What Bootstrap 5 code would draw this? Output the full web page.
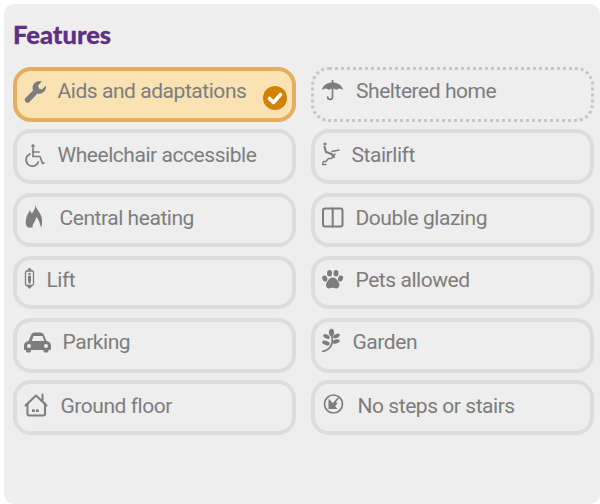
<!DOCTYPE html>
<html lang="en">
<head>
<meta charset="utf-8">
<title>Features</title>
<link href="https://cdn.jsdelivr.net/npm/bootstrap@5.3.0/dist/css/bootstrap.min.css" rel="stylesheet">
<style>
html,body{height:100%;margin:0;background:#fff;overflow:hidden}
.panel-box{margin:4px 0 0 4px;height:500px;background:#eee;border-radius:10px;padding:16px 6px 0 9px}
.feat-title{font-family:Lato,sans-serif;font-weight:900;font-size:25.500px;line-height:28px;color:#5e307f;margin:0 0 19px;-webkit-text-stroke:.3px #5e307f}
.feat-row{display:grid;grid-template-columns:283px 283px;column-gap:15px}
.h55{height:55px}.h54{height:54px}.h53{height:53px}
.mb7{margin-bottom:7px}.mb9{margin-bottom:9px}
.feat{display:flex;align-items:center;border:4.5px solid #ddd;border-radius:18px;padding:0 0 0 6.5px;background:transparent;color:#7d7d7d;font-family:Roboto,"Noto Sans",sans-serif;font-size:21px;letter-spacing:-.45px;line-height:26px;text-align:left;position:relative;min-width:0}
.feat svg{flex:none;fill:#7d7d7d;stroke:none}
.feat .ln{fill:none;stroke:#7d7d7d;stroke-width:1.7;stroke-linecap:round;stroke-linejoin:round}
.feat .cut{fill:#eee}
.up7 span{padding-bottom:7px}.up6 span{padding-bottom:6px}.up4 span{padding-bottom:4px}.up3 span{padding-bottom:3px}
.feat-on{background:#fbe2b3;border-color:#e3ae5f}
.feat-dot{border:3px dotted #c6c6c6;padding-left:8px}
.tick{position:absolute;right:5px;bottom:8px}
</style>
</head>
<body>
<div class="panel-box">
<h2 class="feat-title">Features</h2>

<div class="feat-row h55 mb7 up7">
<div class="feat feat-on">
<svg width="34" height="46" viewBox="24 71.5 34 46"><path d="M46 85l-4 4-3-1-1-3 4-4a7 7 0 0 0-9 9L25 98a3 3 0 0 0 4 4L37.500 93a7 7 0 0 0 8.500-8z"/></svg>
<span>Aids and adaptations</span>
<svg class="tick" width="24" height="24" viewBox="0 0 24 24"><circle cx="12" cy="12" r="12" fill="#d08200"/><path d="M6.500 12.500l4 4 7-8" fill="none" stroke="#fff" stroke-width="3.600" stroke-linecap="round" stroke-linejoin="round"/></svg>
</div>
<div class="feat feat-dot">
<svg width="34" height="49" viewBox="322 70 34 49"><path d="M322 90c1-5.500 6-7.500 10.500-7.500S342 84.500 343 90c-2.500-2-5-2-7 0-1.500-2-5-2-7 0-2-2-4.500-2-7 0z"/><path class="ln" d="M332.500 80.500V83M332.500 88v9a2.400 2.400 0 0 1-4.800 0"/></svg>
<span>Sheltered home</span>
</div>
</div>

<div class="feat-row h55 mb9 up3">
<div class="feat">
<svg width="34" height="46" viewBox="24 133.500 34 46"><circle cx="33" cy="145.500" r="1.700"/><path class="ln" d="M33 148v8h7l2.500 7 1.500-.5M33 151.500h6M30 153.500a6.300 6.300 0 1 0 8.300 8"/></svg>
<span>Wheelchair accessible</span>
</div>
<div class="feat">
<svg width="30" height="46" viewBox="322 133.500 30 46"><circle cx="325" cy="143.500" r="1.600"/><path class="ln" d="M324.500 146.500l1.500 5 5.500 2 2.500 3" style="stroke-width:2.200"/><path class="ln" d="M339 149.500l-7 1.500M335 153.500l-3.500 4.500h-3l-2.500 3h-2.500l-1.500 3h4" style="stroke-width:1.400"/></svg>
<span>Stairlift</span>
</div>
</div>

<div class="feat-row h54 mb9 up4">
<div class="feat">
<svg width="36" height="45" viewBox="24 197.500 36 45"><path d="M35.500 204c0 5 6 8 6.500 15 .3 4-.3 7-1 8-1-4-2.500-9-5-10.500 0 4.500-3.500 6-3.500 10.500h-4.500c-2.500-1.500-2.800-6-1.500-10.500 1-3 2.500-4.500 3.500-7 1 2.500 1.500 3.500 2 3.500 2-3 3.500-5.500 3.500-9z"/></svg>
<span>Central heating</span>
</div>
<div class="feat">
<svg width="34" height="45" viewBox="322 197.500 34 45"><rect x="323" y="208" width="19.500" height="18" rx="2" class="ln" style="stroke-width:2"/><path class="ln" d="M332.700 208v18" style="stroke-width:2"/></svg>
<span>Double glazing</span>
</div>
</div>

<div class="feat-row h53 mb9 up6">
<div class="feat">
<svg width="23" height="44" viewBox="24 260.500 23 44"><rect x="25.500" y="270.500" width="8" height="14.500" rx="1.500" class="ln" style="stroke-width:1.300"/><path d="M29.500 267l2.800 3h-5.600zM29.500 288.500l-2.800-3h5.600z"/><circle cx="29.500" cy="273.500" r="1.200"/><path d="M28 275.200h3v4.500l-.5 3.300h-2l-.5-3.300z"/></svg>
<span>Lift</span>
</div>
<div class="feat">
<svg width="34" height="44" viewBox="322 260.500 34 44"><ellipse cx="324.800" cy="278" rx="2.500" ry="3.100" transform="rotate(-20 324.800 278)"/><ellipse cx="329.500" cy="272.800" rx="2.500" ry="3.300"/><ellipse cx="336" cy="272.800" rx="2.500" ry="3.300"/><ellipse cx="340.500" cy="278" rx="2.500" ry="3.100" transform="rotate(20 340.500 278)"/><path d="M332.700 277c3 0 4.500 2.500 6 5 1.500 2.800.5 6-2.500 6-1.500 0-2.300-.7-3.500-.7s-2 .7-3.500.7c-3 0-4-3.200-2.500-6 1.500-2.500 3-5 6-5z"/></svg>
<span>Pets allowed</span>
</div>
</div>

<div class="feat-row h55 mb7 up7">
<div class="feat">
<svg width="39" height="46" viewBox="24 322.500 39 46"><path d="M31 334.500c.5-1.500 2-2.500 3.500-2.500h6c1.500 0 3 1 3.500 2.500l2.500 6c2.500.5 4.500 2 4.500 4.500v3.500c0 .8-.7 1-1.500 1h-1v1c0 1-1 1.500-2.500 1.500s-2.500-.5-2.500-1.500v-1H31v1c0 1-1 1.500-2.500 1.500s-2.500-.5-2.500-1.500v-1h-.5c-.8 0-1.500-.2-1.500-1V345c0-2.500 2-4 4.500-4.500z"/><path class="cut" d="M33.500 335.500h9l1.700 5H31.800z"/><circle class="cut" cx="29" cy="345.500" r="2"/><circle class="cut" cx="46" cy="345.500" r="2"/></svg>
<span>Parking</span>
</div>
<div class="feat">
<svg width="31" height="46" viewBox="322 322.500 31 46"><path class="ln" d="M322 351c4-.5 7-2.500 9-5.500 1-1.500 1.500-5 1-10"/><ellipse cx="331.500" cy="332" rx="2.600" ry="3.800"/><ellipse cx="326.500" cy="336" rx="1.900" ry="3.500" transform="rotate(-65 326.500 336)"/><ellipse cx="336.500" cy="335.500" rx="1.900" ry="3.500" transform="rotate(65 336.500 335.500)"/><ellipse cx="326" cy="342.500" rx="2" ry="4" transform="rotate(-70 326 342.500)"/><ellipse cx="336" cy="341" rx="2" ry="3.800" transform="rotate(75 336 341)"/></svg>
<span>Garden</span>
</div>
</div>

<div class="feat-row h55 up3">
<div class="feat">
<svg width="37" height="46" viewBox="24 384.500 37 46"><path class="ln" d="M25.500 405l10.500-10 10.500 10M42.500 401v-7M27.500 403v10.500a1.500 1.500 0 0 0 1.500 1.500h14.500a1.500 1.500 0 0 0 1.500-1.500V403" style="stroke-width:2"/><rect x="32" y="408.800" width="2.800" height="2.800" rx=".6"/><rect x="36" y="408.800" width="2.800" height="2.800" rx=".6"/></svg>
<span>Ground floor</span>
</div>
<div class="feat">
<svg width="36" height="46" viewBox="322 384.500 36 46"><circle cx="333.500" cy="403.500" r="9" class="ln"/><path d="M328.500 398.500l2.500 2 2 3 2.500-2.500 2 2-2.500 2.500 2.500 3h-9z"/><path class="ln" d="M332 404.500l6-6.500"/></svg>
<span>No steps or stairs</span>
</div>
</div>

</div>
</body>
</html>
